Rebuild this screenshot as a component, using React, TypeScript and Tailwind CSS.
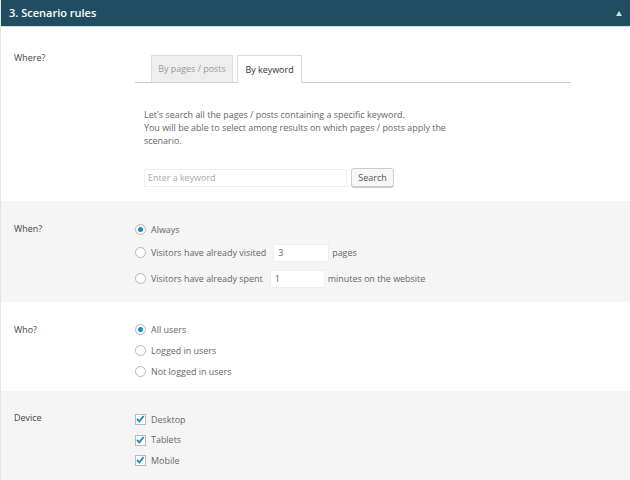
const font = "font-['Open_Sans',sans-serif]";

function Radio({ checked }: { checked?: boolean }) {
  return (
    <span className="flex h-[11px] w-[11px] shrink-0 items-center justify-center rounded-full border border-[#b4b9be] bg-white">
      {checked && <span className="h-[5px] w-[5px] rounded-full bg-[#1e8cbe]" />}
    </span>
  );
}

function Check() {
  return (
    <span className="flex h-[11px] w-[11px] shrink-0 items-center justify-center border border-[#b4b9be] bg-white">
      <svg viewBox="0 0 11 11" className="h-[11px] w-[11px] overflow-visible">
        <path d="M2 5 L4.4 7.4 L8.6 2" fill="none" stroke="#1e8cbe" strokeWidth="1.9" />
      </svg>
    </span>
  );
}

function NumberBox({ value, width }: { value: string; width: string }) {
  return (
    <div className={`${width} ml-[7px] mr-[3px] flex h-[18px] items-center border border-[#eeeeee] bg-white pl-[4px] text-[#666]`}>
      {value}
    </div>
  );
}

export default function App() {
  return (
    <div className={`${font} h-[480px] w-[630px] overflow-hidden border-l border-[#e5e5e5] bg-white text-[8.95px] text-[#666]`}>
      <div className="flex h-[27px] items-center justify-between border-b border-[#d5dde0] bg-[#1f4e60] pl-[8px] pr-[8px]">
        <span className="text-[11px] font-semibold text-white">3. Scenario rules</span>
        <span className="h-0 w-0 border-x-[3px] border-b-[5px] border-x-transparent border-b-[#d5e0e5]" />
      </div>

      <div className="flex h-[174px] pl-[13px] pt-[24px]">
        <div className="w-[121px] text-[#444]">Where?</div>
        <div className="w-[436px] pt-[4px]">
          <div className="flex h-[28px] items-end gap-[4px] border-b border-[#ccc] pl-[16px]">
            <div className="flex h-[27px] w-[82px] items-center justify-center border border-b-0 border-[#ddd] bg-[#eeeeee] text-[#999]">
              By pages / posts
            </div>
            <div className="relative top-px flex h-[28px] w-[65px] items-center justify-center border border-b-0 border-[#ddd] bg-white text-[#333]">
              By keyword
            </div>
          </div>
          <p className="mt-[25px] w-[320px] pl-[9px] leading-[13px]">
            Let's search all the pages / posts containing a specific keyword.
            <br />
            You will be able to select among results on which pages / posts apply the scenario.
          </p>
          <div className="mt-[21px] flex items-start gap-[4px] pl-[9px]">
            <div className="mt-px flex h-[18px] w-[203px] items-center border border-[#eeeeee] pl-[3px] text-[#aaa]">
              Enter a keyword
            </div>
            <div className="flex h-[19px] w-[43px] items-center justify-center rounded-[3px] border border-[#ccc] bg-[#f7f7f7] text-[#555] shadow-[0_1px_0_#ccc]">
              Search
            </div>
          </div>
        </div>
      </div>

      <div className="flex h-[101px] bg-[#f5f5f5] pl-[13px] pt-[21px]">
        <div className="w-[121px] text-[#444]">When?</div>
        <div className="flex flex-col pt-px">
          <div className="flex h-[13px] items-center gap-[5px]">
            <Radio checked />
            <span>Always</span>
          </div>
          <div className="mt-[5px] flex h-[23px] items-center">
            <Radio />
            <span className="ml-[5px]">Visitors have already visited</span>
            <NumberBox value="3" width="w-[56px]" />
            <span>pages</span>
          </div>
          <div className="mt-[3px] flex h-[23px] items-center">
            <Radio />
            <span className="ml-[5px]">Visitors have already spent</span>
            <NumberBox value="1" width="w-[55px]" />
            <span>minutes on the website</span>
          </div>
        </div>
      </div>

      <div className="flex h-[89px] pl-[13px] pt-[21px]">
        <div className="w-[121px] text-[#444]">Who?</div>
        <div className="flex flex-col gap-[8px]">
          <div className="flex h-[13px] items-center gap-[5px]">
            <Radio checked />
            <span>All users</span>
          </div>
          <div className="flex h-[13px] items-center gap-[5px]">
            <Radio />
            <span>Logged in users</span>
          </div>
          <div className="flex h-[13px] items-center gap-[5px]">
            <Radio />
            <span>Not logged in users</span>
          </div>
        </div>
      </div>

      <div className="flex h-[89px] bg-[#f5f5f5] pl-[13px] pt-[20px]">
        <div className="w-[121px] text-[#444]">Device</div>
        <div className="flex flex-col gap-[7.5px] pt-[2px]">
          <div className="flex h-[13px] items-center gap-[5px]">
            <Check />
            <span>Desktop</span>
          </div>
          <div className="flex h-[13px] items-center gap-[5px]">
            <Check />
            <span>Tablets</span>
          </div>
          <div className="flex h-[13px] items-center gap-[5px]">
            <Check />
            <span>Mobile</span>
          </div>
        </div>
      </div>
    </div>
  );
}
